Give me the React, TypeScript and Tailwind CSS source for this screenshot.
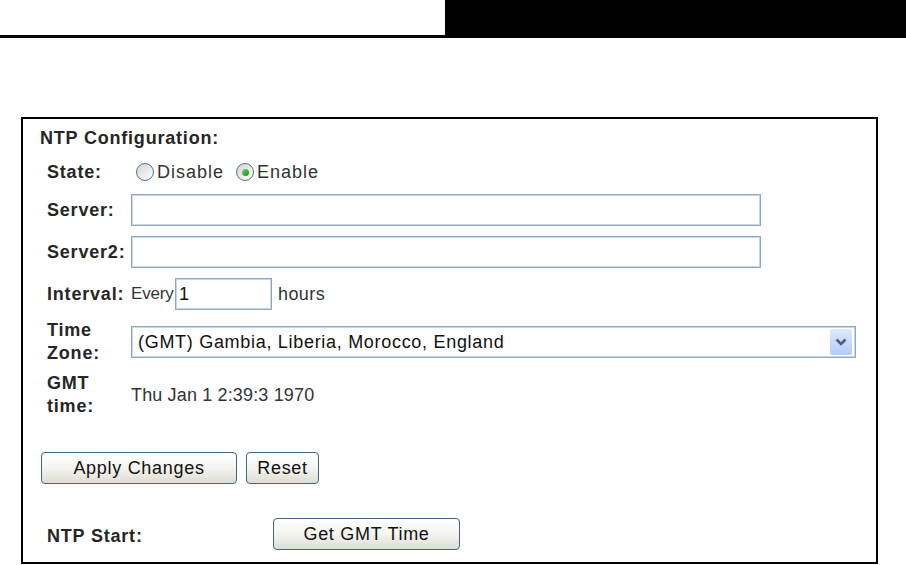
import React from 'react'

const label = "font-['Liberation_Sans',Arial,sans-serif] font-bold text-[18px] leading-[23px] tracking-[0.8px] text-[#262626]"
const field = 'h-[32px] border border-[#8ca6c4] bg-white shadow-[inset_0_0_0_1px_#c9d6e6]'
const button =
  "h-[32px] rounded-[4px] border border-[#3d6590] bg-gradient-to-b from-white via-[#f4f4f1] to-[#dedcd2] font-['Liberation_Sans',Arial,sans-serif] text-[18px] tracking-[0.7px] text-[#111]"

function Radio({ checked }: { checked?: boolean }) {
  return (
    <span className="flex h-[18px] w-[18px] items-center justify-center rounded-full border border-[#4f7198] bg-gradient-to-br from-[#d4d4d0] to-white">
      {checked && <span className="h-[7px] w-[7px] rounded-full bg-gradient-to-br from-[#5fe05f] to-[#1a8a1a]" />}
    </span>
  )
}

export default function App() {
  return (
    <div className="h-[565px] w-[906px] bg-white font-['Liberation_Sans',Arial,sans-serif]">
      {/* header band */}
      <div className="flex">
        <div className="h-[38px] flex-1 border-b-[3px] border-black" />
        <div className="h-[38px] w-[461px] bg-black" />
      </div>

      <div className="ml-[21px] mt-[79px] h-[447px] w-[857px] border-2 border-black pl-[17px] pt-[8px]">
        <div className={label + ' leading-[20px]'}>NTP Configuration:</div>

        <div className="mt-[10px] flex flex-col pl-[7px]">
          {/* State */}
          <div className="flex h-[24px] items-center">
            <div className={label + ' w-[89px]'}>State:</div>
            <div className="flex items-center text-[18px] tracking-[1px] text-[#333]">
              <Radio />
              <span className="ml-[3px]">Disable</span>
              <span className="ml-[12px]"><Radio checked /></span>
              <span className="ml-[3px]">Enable</span>
            </div>
          </div>

          {/* Server */}
          <div className="mt-[10px] flex items-center">
            <div className={label + ' w-[84px]'}>Server:</div>
            <div className={field + ' w-[630px]'} />
          </div>

          {/* Server2 */}
          <div className="mt-[10px] flex items-center">
            <div className={label + ' w-[84px] tracking-[0.6px]'}>Server2:</div>
            <div className={field + ' w-[630px]'} />
          </div>

          {/* Interval */}
          <div className="mt-[10px] flex items-center">
            <div className={label + ' w-[84px] tracking-[0.4px]'}>Interval:</div>
            <span className="w-[44px] text-[17px] tracking-[-0.2px] text-[#333]">Every</span>
            <div className={field + ' flex w-[97px] items-center pl-[3px] text-[18px] text-[#111]'}>1</div>
            <span className="ml-[6px] text-[18px] tracking-[0.4px] text-[#333]">hours</span>
          </div>

          {/* Time Zone */}
          <div className="mt-[9px] flex items-center">
            <div className={label + ' w-[84px]'}>
              Time
              <br />
              Zone:
            </div>
            <div className={field + ' flex w-[725px] items-center justify-between pl-[6px] pr-[3px]'}>
              <span className="text-[18px] tracking-[0.7px] text-[#111]">(GMT) Gambia, Liberia, Morocco, England</span>
              <span className="flex h-[26px] w-[22px] items-center justify-center rounded-[2px] bg-gradient-to-b from-[#dfe8fd] to-[#b6cbf7]">
                <svg width="12" height="8" viewBox="0 0 12 8">
                  <path d="M1.5 1.5 L6 6 L10.5 1.5" fill="none" stroke="#4a5e82" strokeWidth="2.6" />
                </svg>
              </span>
            </div>
          </div>

          {/* GMT time */}
          <div className="mt-[7px] flex items-center">
            <div className={label + ' w-[84px]'}>
              GMT
              <br />
              time:
            </div>
            <span className="text-[18px] tracking-[0.15px] text-[#333]">Thu Jan 1 2:39:3 1970</span>
          </div>
        </div>

        {/* actions */}
        <div className="mt-[34px] flex gap-[9px] pl-[1px]">
          <button className={button + ' w-[196px]'}>Apply Changes</button>
          <button className={button + ' w-[73px]'}>Reset</button>
        </div>

        <div className="mt-[34px] flex items-center pl-[7px]">
          <div className={label + ' w-[226px] pt-[4px]'}>NTP Start:</div>
          <button className={button + ' w-[187px]'}>Get GMT Time</button>
        </div>
      </div>
    </div>
  )
}
